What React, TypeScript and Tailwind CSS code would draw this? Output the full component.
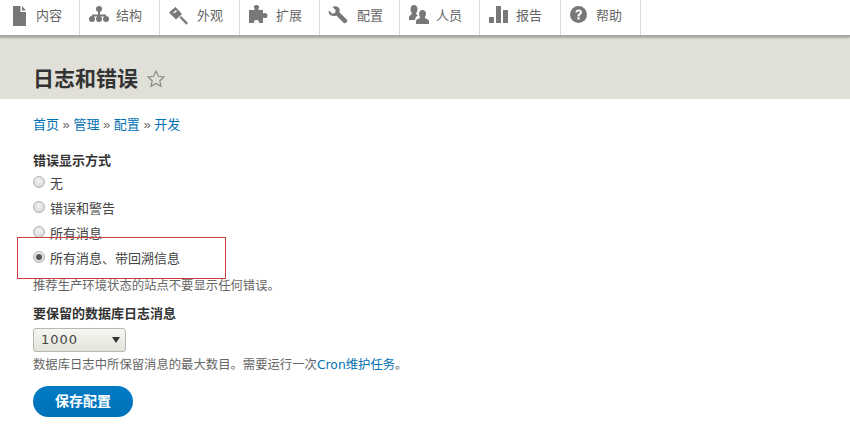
import React from "react";

const gray = "#787878";

const icons: Record<string, React.ReactNode> = {
  content: <path d="M0 2h7.500v6H13v14H0zM9 2l4 4.500H9z" fill={gray} />,
  structure: (
    <g fill={gray}>
      <circle cx="10" cy="5" r="3" />
      <rect x="9" y="6" width="2" height="8" />
      <path d="M3 10.500h14v4h-2v-2H5v2H3z" />
      <circle cx="3" cy="15" r="3" />
      <circle cx="10" cy="15" r="3" />
      <circle cx="17" cy="15" r="3" />
    </g>
  ),
  appearance: (
    <g fill={gray}>
      <path d="M0 8.500 6.500 3l6.500 7-6 5.500z" />
      <path d="M10.500 13.500 12 12l7 7-1.800 1.800z" />
      <path d="M4.200 8.400 7 6l1 1-2.800 2.400z" fill="#fff" />
    </g>
  ),
  extend: (
    <path
      d="M0 6h5.500V4.500C4.500 3.500 4.500 1 7.500 1s3 2.500 2 3.500V6H14v3.500c1-1 4.500-1 4.500 2s-3.500 3-4.500 2V19H9.500c.8-1 .8-3-2-3s-2.800 2-2 3H0z"
      fill={gray}
    />
  ),
  config: (
    <path
      d="M1 6.500 4.300 9.700 7 9l.7-2.700L4.500 3C7 1.500 10.500 2 11.500 5c.4 1.200.2 2.300-.1 3.200l7.600 7.600c1.300 1.300-1.700 4.600-3.200 3.200L8.300 11.400C5.500 12.500 3 12 1.500 10.300.5 9.200.5 7.700 1 6.500z"
      fill={gray}
    />
  ),
  people: (
    <g fill={gray}>
      <path d="M5 1c2.300 0 3.500 1.800 3.500 4S7.300 9 7 10l2 1.500c-2 1-3 2.500-3 4.500H0v-3c0-1.700 3-2.500 3-3.500C2.500 8.500 1.500 7.300 1.500 5 1.500 2.800 2.800 1 5 1z" />
      <path d="M13.500 6c2.300 0 3.500 1.800 3.500 3.800 0 1.700-.8 2.700-1.200 3.700 1 1.500 4.200 1.500 4.200 4V20H7v-2.500c0-2.500 3.200-2.500 4.200-4-.4-1-1.200-2-1.200-3.700C10 7.800 11.200 6 13.500 6z" />
    </g>
  ),
  reports: (
    <g fill={gray}>
      <rect x="0" y="13" width="5" height="6" />
      <rect x="7" y="2" width="5" height="17" />
      <rect x="14" y="6" width="5" height="13" />
    </g>
  ),
  help: (
    <g transform="translate(0 2)">
      <circle cx="8.500" cy="8.500" r="8.500" fill={gray} />
      <path d="M5.300 6.300C5.500 4.400 6.900 3.400 8.700 3.400c2 0 3.300 1.200 3.300 2.800 0 2.400-2.500 2.400-2.500 4.300H7.500c0-2.900 2.300-2.900 2.300-4.200 0-.7-.5-1.100-1.200-1.100-.8 0-1.200.5-1.300 1.300z" fill="#fff" />
      <rect x="7.500" y="11.300" width="2.200" height="2.200" fill="#fff" />
    </g>
  ),
};

const nav: { label: string; icon: string; w: string; iw: number; cls: string }[] = [
  { label: "内容", icon: "content", w: "w-[80px]", iw: 15, cls: "pl-[13px] gap-[8px]" },
  { label: "结构", icon: "structure", w: "w-[80px]", iw: 20, cls: "pl-[9px] gap-[7px]" },
  { label: "外观", icon: "appearance", w: "w-[80px]", iw: 20, cls: "pl-[9px] gap-[8px]" },
  { label: "扩展", icon: "extend", w: "w-[80px]", iw: 20, cls: "pl-[9px] gap-[7px]" },
  { label: "配置", icon: "config", w: "w-[80px]", iw: 20, cls: "pl-[8px] gap-[9px]" },
  { label: "人员", icon: "people", w: "w-[80px]", iw: 20, cls: "pl-[9px] gap-[7px]" },
  { label: "报告", icon: "reports", w: "w-[81px]", iw: 20, cls: "pl-[9px] gap-[7px]" },
  { label: "帮助", icon: "help", w: "w-[80px]", iw: 18, cls: "pl-[9px] gap-[8px]" },
];

function Radio({ checked }: { checked?: boolean }) {
  return (
    <span className="w-[12px] h-[12px] mb-[3px] rounded-full border border-[#b4b4b4] bg-[radial-gradient(circle_at_50%_35%,#f4f4f4,#d0d0d0)] flex items-center justify-center shrink-0">
      {checked && <span className="w-[6px] h-[6px] rounded-full bg-[#555]" />}
    </span>
  );
}

const radios = [
  { label: "无", checked: false },
  { label: "错误和警告", checked: false },
  { label: "所有消息", checked: false },
  { label: "所有消息、带回溯信息", checked: true },
];

function Sep() {
  return <span className="inline-block w-[14.4px] text-center text-[#666]">»</span>;
}

export default function App() {
  return (
    <div className="w-[850px] h-[425px] overflow-hidden bg-white relative text-[13px] text-[#333] font-['Liberation_Sans','Noto_Sans_CJK_SC',sans-serif]">
      <nav className="flex h-[37px] bg-white border-b-2 border-[#a8a8a0] shadow-[0_1px_2px_rgba(0,0,0,0.25)] relative">
        {nav.map((n) => (
          <div key={n.label} className={`${n.w} h-[35px] border-r border-[#dcdcdc] flex items-center pb-[3px] ${n.cls} text-[#666]`}>
            <svg width={n.iw} height="24" viewBox={`0 0 ${n.iw} 24`} className="shrink-0">
              {icons[n.icon]}
            </svg>
            <span>{n.label}</span>
          </div>
        ))}
      </nav>
      <header className="h-[62px] bg-[#e0e0d8] pl-[33px] pt-[28px]">
        <h1 className="flex items-center gap-[8px] text-[21px] leading-[28px] font-bold text-[#333]">
          日志和错误
          <svg width="20" height="20" viewBox="0 0 24 24" fill="none" stroke="#8a8a8a" strokeWidth="1.400">
            <path d="M12 2.500l2.900 6.200 6.700.8-5 4.600 1.400 6.700-6-3.400-6 3.400 1.400-6.700-5-4.600 6.700-.8z" />
          </svg>
        </h1>
      </header>
      <main className="pl-[33px]">
        <div className="pt-[17px] h-[53px] leading-[18px] text-[#0071b3]">
          <a>首页</a>
          <Sep />
          <a>管理</a>
          <Sep />
          <a>配置</a>
          <Sep />
          <a>开发</a>
        </div>
        <div className="font-bold leading-[18px]">错误显示方式</div>
        <div className="flex flex-col pt-[1px]">
          {radios.map((r) => (
            <label key={r.label} className="h-[25px] flex items-center gap-[5px] text-[#444]">
              <Radio checked={r.checked} />
              <span>{r.label}</span>
            </label>
          ))}
        </div>
        <p className="text-[12.35px] leading-[16px] text-[#666] mt-[7px]">推荐生产环境状态的站点不要显示任何错误。</p>
        <div className="font-bold leading-[18px] mt-[11px]">要保留的数据库日志消息</div>
        <div className="mt-[5px] w-[93px] h-[24px] border border-[#b8b8b0] rounded-[3px] bg-gradient-to-b from-[#f6f6f2] to-[#e4e4dc] flex items-center justify-between pl-[7px] pr-[5px] text-[#444] tracking-[1px] font-['DejaVu_Sans',sans-serif] text-[13px]">
          <span>1000</span>
          <span className="w-0 h-0 border-x-[4px] border-x-transparent border-t-[6px] border-t-[#333]" />
        </div>
        <p className="text-[12.35px] leading-[16px] text-[#666] mt-[5px]">
          数据库日志中所保留消息的最大数目。需要运行一次<a className="text-[#0071b3] font-['DejaVu_Sans','Noto_Sans_CJK_SC',sans-serif]">Cron维护任务</a>。
        </p>
        <button className="mt-[13px] w-[100px] h-[31px] rounded-[16px] bg-gradient-to-b from-[#007bc6] to-[#0071b8] text-white font-bold text-[14px]">保存配置</button>
      </main>
      <div className="absolute left-[17px] top-[237px] w-[209px] h-[42px] border border-[#c9403f] pointer-events-none" />
    </div>
  );
}
